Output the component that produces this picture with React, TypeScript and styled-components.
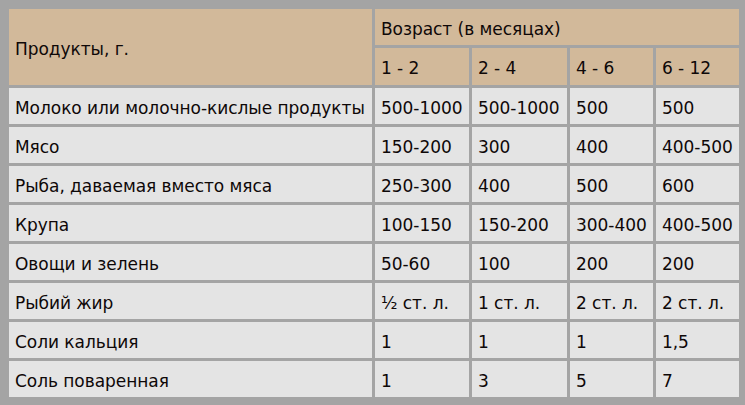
import React from "react";
import styled, { createGlobalStyle } from "styled-components";

const Global = createGlobalStyle`
  html, body { margin: 0; padding: 0; background: #a4a4a4; }
  body { font-family: Tahoma, "DejaVu Sans", sans-serif; }
`;

const Page = styled.div`
  width: 745px;
  height: 405px;
  box-sizing: border-box;
  padding: 9px 6px 0 9px;
  background: #a4a4a4;
`;

const Grid = styled.div`
  display: grid;
  grid-template-columns: 363px 94px 95px 83px 83px;
  grid-template-rows: 36px 37px repeat(8, 36px);
  gap: 3px;
`;

const Cell = styled.div<{ $head?: boolean; $rowSpan?: number; $colSpan?: number }>`
  display: flex;
  align-items: center;
  padding: 3px 6px 0;
  box-sizing: border-box;
  background: ${(p) => (p.$head ? "#d2b99a" : "#e4e4e4")};
  color: #0e0808;
  font-size: 17px;
  letter-spacing: -0.05px;
  white-space: nowrap;
  overflow: hidden;
  grid-row: ${(p) => (p.$rowSpan ? `span ${p.$rowSpan}` : "auto")};
  grid-column: ${(p) => (p.$colSpan ? `span ${p.$colSpan}` : "auto")};
`;

const rows: [string, string, string, string, string][] = [
  ["Молоко или молочно-кислые продукты", "500-1000", "500-1000", "500", "500"],
  ["Мясо", "150-200", "300", "400", "400-500"],
  ["Рыба, даваемая вместо мяса", "250-300", "400", "500", "600"],
  ["Крупа", "100-150", "150-200", "300-400", "400-500"],
  ["Овощи и зелень", "50-60", "100", "200", "200"],
  ["Рыбий жир", "½ ст. л.", "1 ст. л.", "2 ст. л.", "2 ст. л."],
  ["Соли кальция", "1", "1", "1", "1,5"],
  ["Соль поваренная", "1", "3", "5", "7"],
];

export default function App() {
  return (
    <Page>
      <Global />
      <Grid>
        <Cell $head $rowSpan={2}>Продукты, г.</Cell>
        <Cell $head $colSpan={4}>Возраст (в месяцах)</Cell>
        <Cell $head>1 - 2</Cell>
        <Cell $head>2 - 4</Cell>
        <Cell $head>4 - 6</Cell>
        <Cell $head>6 - 12</Cell>
        {rows.map((r) =>
          r.map((c, i) => <Cell key={r[0] + i}>{c}</Cell>)
        )}
      </Grid>
    </Page>
  );
}
